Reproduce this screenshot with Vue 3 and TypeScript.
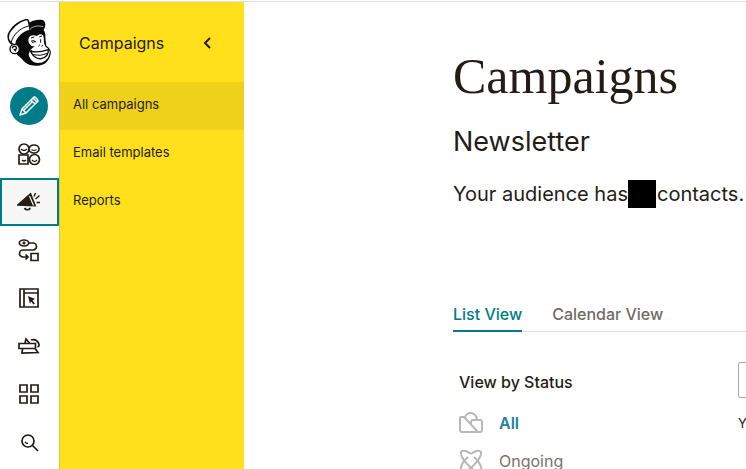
<script setup lang="ts">
import { ref } from 'vue'

const railItems = ['Audience', 'Campaigns', 'Automations', 'Website', 'Content Studio', 'Integrations', 'Search']
const activeRail = ref('Campaigns')

const menuItems = ['All campaigns', 'Email templates', 'Reports']
const activeMenu = ref('All campaigns')

const tabs = ['List View', 'Calendar View']
const activeTab = ref('List View')

const statuses = ['All', 'Ongoing']
const activeStatus = ref('All')
const query = ref('')
</script>

<template>
  <div class="page">
    <nav class="rail" aria-label="Main">
      <a class="logo" href="#" aria-label="Home">
        <svg viewBox="21 57 132 141" width="44" height="47" aria-hidden="true">
          <path fill="#0b0b0b" d="M84 72C94 62 110 58 128 60C138 64 138 78 131 90C136 98 137 106 136 114L139 137C150 144 156 155 151 165C147 184 132 198 110 197C90 198 76 190 66 177C56 168 50 164 47 158C40 145 48 130 47 121L37 135C27 132 20 117 23 103C32 80 56 60 82 56Q88 58 89 70Z" />
          <path fill="#fff" d="M29 120C24 108 30 95 42 84C54 71 70 62 82 61L86 77L88 90C70 93 54 108 43 131L36 128Z" />
          <path fill="none" stroke="#0b0b0b" stroke-width="3" d="M34 126C40 103 60 84 86 78" />
          <path fill="none" stroke="#fff" stroke-width="2" d="M90 88C99 78 114 76 130 80" />
          <circle cx="44" cy="147" r="14" fill="#fff" stroke="#0b0b0b" stroke-width="4" />
          <path fill="none" stroke="#0b0b0b" stroke-width="4" d="M37 145C38 135 52 138 49 147L43 149L48 154" />
          <path fill="#fff" d="M85 119C86 106 99 103 111 108C120 99 130 102 131 112L132 129L137 141C147 146 153 157 147 165C144 179 128 190 113 189C99 188 89 177 86 164C88 149 97 146 104 139C92 139 85 131 85 119Z" />
          <path fill="none" stroke="#0b0b0b" stroke-width="3" stroke-linecap="round" d="M94 123Q101 119 107 125L97 127M122 119V127M94 114L102 111M119 110L125 108M116 138L119 135M125 138L128 137" />
          <path fill="#fff" stroke="#0b0b0b" stroke-width="4" d="M91 153Q111 160 145 149Q146 171 123 176Q103 178 91 153Z" />
          <path fill="none" stroke="#0b0b0b" stroke-width="3" d="M98 164Q121 170 143 160M95 151L89 157" />
        </svg>
      </a>
      <button class="create" type="button" aria-label="Create">
        <svg viewBox="0 0 24 24" width="24" height="24" fill="none" stroke="#fff" stroke-width="1.5" stroke-linejoin="round" aria-hidden="true">
          <path d="M3 21L5 15L16 4Q17 2 19 4L20 5Q22 7 20 8L9 19ZM14 6L18 10M16 4L20 8M5 15L9 19M7 16L16 7" />
        </svg>
      </button>
      <button
        v-for="item in railItems"
        :key="item"
        class="rail-item"
        :class="{ selected: item === activeRail }"
        type="button"
        :aria-label="item"
        @click="activeRail = item"
      >
        <svg viewBox="0 0 24 24" width="24" height="24" fill="none" stroke="#241c15" stroke-width="1.7" aria-hidden="true">
          <g v-if="item === 'Audience'">
            <circle cx="7" cy="7" r="5" />
            <ellipse cx="17" cy="7" rx="5" ry="4" />
            <path d="M2 13H11V22H2Z" />
            <circle cx="17.500" cy="17.500" r="5" />
            <path stroke-width="1.200" d="M4 7Q7 10 10 7M14.500 7.500Q17 9.500 19.500 7.500M5 18Q7 20 9 18M15 18Q17.500 21 20 18" />
          </g>
          <g v-else-if="item === 'Campaigns'">
            <path fill="#241c15" d="M1 15L13.500 4L18 15.500Z" />
            <path stroke="#f6f6f4" stroke-width="1.200" d="M12.500 6L16.500 15.500" />
            <path d="M7.500 18Q8.500 20 11 19.700Q13 19.500 13 17.800" />
            <path stroke-width="1.400" d="M17 6.500L18.500 3M18.500 9L22.500 5.500M19.500 12.500H23" />
          </g>
          <g v-else-if="item === 'Automations'">
            <ellipse cx="7" cy="5" rx="4.700" ry="3" />
            <circle cx="7" cy="5" r=".7" fill="#241c15" />
            <path d="M12 5H16A3.500 3.500 0 0 1 16 12H6A3.500 3.500 0 0 0 6 19H11M8.500 16.500L11 19L8.500 21.500M14 15.500H21V22.500H14Z" />
          </g>
          <g v-else-if="item === 'Website'">
            <path d="M3 3H21V21H3ZM7 3V21M7 7H21" />
            <path fill="#241c15" stroke="none" d="M11 10L18 13L15.500 14.500L18 17.500L16.500 18.500L14 15.500L13 18Z" />
          </g>
          <g v-else-if="item === 'Content Studio'">
            <path d="M2 9.500H18.500V14.500H2ZM8 9L9 5L12.500 9M5.500 15L5 19L21 18.500L18 14.500M14 6C17 5 20 6 21.500 9Q23 12 20.500 13" />
          </g>
          <g v-else-if="item === 'Integrations'">
            <path d="M3 3H10V10H3ZM14 3H21V10H14ZM3 14H10V21H3ZM14 14H21V21H14Z" />
          </g>
          <g v-else>
            <circle cx="11" cy="11" r="6" />
            <path d="M15.500 15.500L21 21" />
            <path stroke-width="1.300" d="M8 12Q10 14 11 13" />
          </g>
        </svg>
      </button>
    </nav>

    <aside class="submenu">
      <header class="submenu-head">
        <span>Campaigns</span>
        <button class="collapse" type="button" aria-label="Collapse menu">
          <svg viewBox="0 0 10 12" width="10" height="12" fill="none" stroke="#241c15" stroke-width="2" aria-hidden="true">
            <path d="M8 1L3 6L8 11" />
          </svg>
        </button>
      </header>
      <a
        v-for="item in menuItems"
        :key="item"
        class="submenu-link"
        :class="{ current: item === activeMenu }"
        href="#"
        @click.prevent="activeMenu = item"
      >{{ item }}</a>
    </aside>

    <main class="content">
      <h1>Campaigns</h1>
      <h2>Newsletter</h2>
      <p class="audience">Your audience has <span class="redacted"></span>contacts.</p>

      <div class="tabs" role="tablist">
        <button
          v-for="tab in tabs"
          :key="tab"
          class="tab"
          :class="{ active: tab === activeTab }"
          type="button"
          role="tab"
          :aria-selected="tab === activeTab"
          @click="activeTab = tab"
        >{{ tab }}</button>
      </div>

      <div class="columns">
        <section class="status">
          <h3>View by Status</h3>
          <a
            v-for="status in statuses"
            :key="status"
            class="status-link"
            :class="{ active: status === activeStatus }"
            href="#"
            @click.prevent="activeStatus = status"
          >
            <svg viewBox="0 0 24 24" width="24" height="24" fill="none" stroke="#b9b8b6" stroke-width="2" stroke-linejoin="round" aria-hidden="true">
              <path v-if="status === 'All'" d="M1 7Q1 6 2 6H5L19 21H3Q1 21 1 19ZM6 7C7 0 17 0 18 9M12 13V11Q12 9 14 9H21Q23 9 23 11V19Q23 21 21 21H18" />
              <path v-else d="M12 5C7 1 3 1 2 3C1 8 7 14 12 19C17 23 21 23 22 21C23 17 19 11 15 8M12 5C17 1 21 1 22 3C23 8 17 14 12 19C7 23 3 23 2 21C1 17 5 11 9 8" />
            </svg>
            <span>{{ status }}</span>
          </a>
        </section>
        <section class="results">
          <input v-model="query" class="search" type="text" aria-label="Find a campaign" />
          <p>Y</p>
        </section>
      </div>
    </main>
  </div>
</template>

<style>
body {
  margin: 0;
  overflow: hidden;
}
</style>

<style scoped>
.page {
  display: flex;
  height: 100vh;
  box-sizing: border-box;
  padding-top: 2px;
  background: linear-gradient(#fff 1px, #dedede 1px, #dedede 2px, #fff 2px);
  color: #241c15;
  font-family: Inter, "Liberation Sans", sans-serif;
  overflow: hidden;
}

button {
  padding: 0;
  border: 0;
  background: none;
  color: inherit;
  font: inherit;
  cursor: pointer;
}

a {
  color: inherit;
  text-decoration: none;
}

svg {
  display: block;
  flex: none;
}

.rail {
  flex: none;
  display: flex;
  flex-direction: column;
  align-items: center;
  width: 59px;
  border-right: 1px solid #d9c64b;
}

.logo {
  height: 68px;
  padding-top: 17px;
  margin-right: 1px;
}

.create {
  display: grid;
  place-items: center;
  flex: none;
  width: 38px;
  height: 38px;
  margin: 0 1px 5px 0;
  border-radius: 50%;
  background: #007c89;
}

.rail-item {
  display: grid;
  place-items: center;
  flex: none;
  width: 100%;
  height: 48px;
}

.rail-item svg {
  margin-right: 1px;
}

.rail-item.selected {
  background: #f6f6f4;
  border: 2px solid #007c89;
}

.submenu {
  flex: none;
  width: 184px;
  background: #ffe01b;
  font-size: 13px;
}

.submenu-head {
  display: flex;
  align-items: center;
  justify-content: space-between;
  height: 80px;
  box-sizing: border-box;
  padding: 2px 32px 0 19px;
  font-size: 16px;
}

.submenu-link {
  display: block;
  padding: 0 13px 4px;
  line-height: 44px;
}

.submenu-link.current {
  background: #efd01b;
}

.content {
  flex: 1;
  min-width: 0;
  padding: 44px 0 0 209px;
}

h1,
h2,
h3,
p {
  margin: 0;
  font-weight: 400;
}

h1 {
  font-family: "Liberation Serif", serif;
  font-size: 50px;
  line-height: 60px;
}

h2 {
  margin-top: 18px;
  font-size: 27px;
  line-height: 36px;
}

.audience {
  display: flex;
  align-items: center;
  margin-top: 18px;
  font-size: 20px;
  line-height: 32px;
  white-space: nowrap;
}

.redacted {
  flex: none;
  width: 28px;
  height: 28px;
  margin-right: 1px;
  background: #000;
}

.tabs {
  display: flex;
  gap: 30px;
  margin-top: 88px;
  box-shadow: inset 0 -1px #dedddc;
}

.tab {
  height: 34px;
  border-bottom: 2px solid transparent;
  color: #706b66;
  font-size: 16px;
  font-weight: 500;
  white-space: nowrap;
}

.tab.active {
  border-color: #007c89;
  color: #007c89;
}

.columns {
  display: flex;
  padding-top: 30px;
}

.status {
  flex: none;
  box-sizing: border-box;
  width: 285px;
  padding: 8px 6px 0;
}

h3 {
  margin-bottom: 10px;
  font-size: 16px;
  font-weight: 500;
  line-height: 24px;
}

.status-link {
  display: flex;
  align-items: center;
  gap: 16px;
  height: 38px;
  color: #77736f;
  font-size: 16px;
}

.status-link.active {
  color: #24809c;
  font-weight: 600;
}

.results {
  flex: none;
  width: 360px;
  font-size: 13px;
}

.search {
  display: block;
  box-sizing: border-box;
  width: 100%;
  height: 36px;
  margin-bottom: 16px;
  border: 1px solid #aaa8a5;
  border-radius: 2px;
  font: inherit;
}

.results p {
  line-height: 18px;
}
</style>
